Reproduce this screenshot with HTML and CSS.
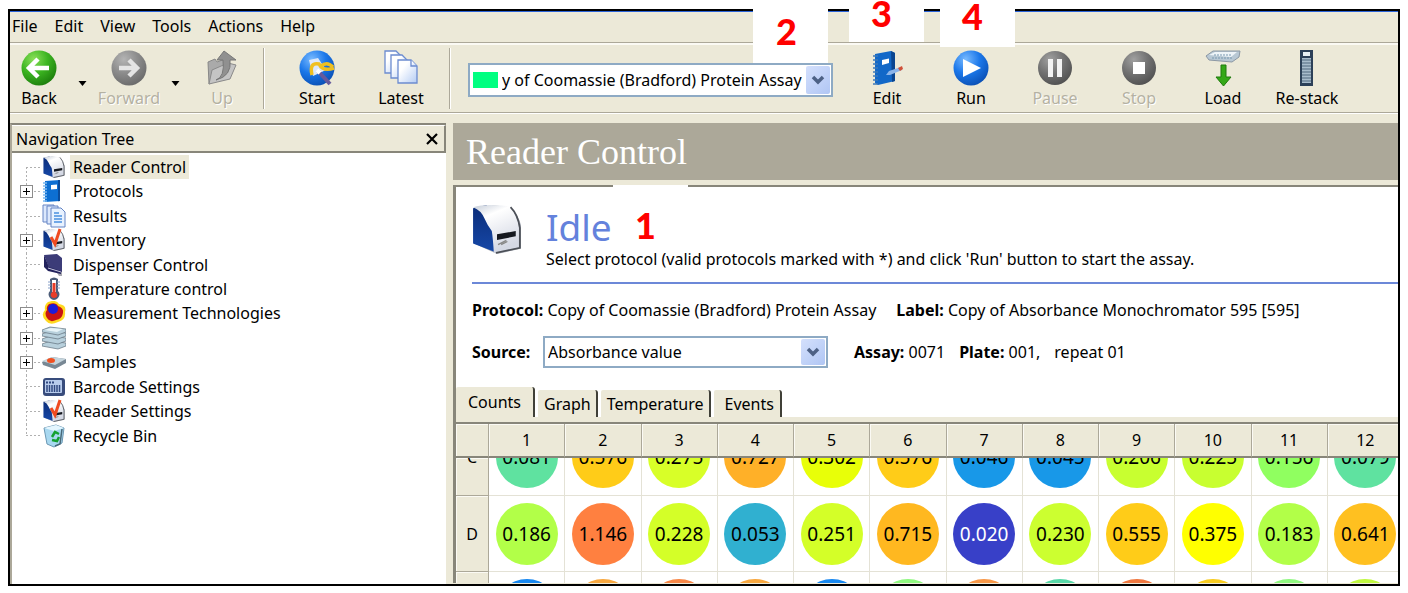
FILE: index.html
```html
<!DOCTYPE html>
<html lang="en">
<head>
<meta charset="utf-8">
<title>Reader Control</title>
<link rel="stylesheet" href="styles.css">
</head>
<body>
<svg class="defs" aria-hidden="true">
  <defs>
    <radialGradient id="gGreen" cx=".35" cy=".25" r=".8"><stop offset="0" stop-color="#8be05a"/><stop offset=".5" stop-color="#3cb521"/><stop offset="1" stop-color="#1c7d0c"/></radialGradient>
    <radialGradient id="gGray" cx=".35" cy=".25" r=".8"><stop offset="0" stop-color="#b4b4b4"/><stop offset=".5" stop-color="#8c8c8c"/><stop offset="1" stop-color="#6a6a6a"/></radialGradient>
    <radialGradient id="gDark" cx=".35" cy=".25" r=".8"><stop offset="0" stop-color="#a0a0a0"/><stop offset=".5" stop-color="#737373"/><stop offset="1" stop-color="#505050"/></radialGradient>
    <radialGradient id="gBlue" cx=".35" cy=".25" r=".8"><stop offset="0" stop-color="#78baff"/><stop offset=".5" stop-color="#1c78ea"/><stop offset="1" stop-color="#0a4fb4"/></radialGradient>
    <linearGradient id="gPage" x2="1" y2="1"><stop offset=".3" stop-color="#fff"/><stop offset="1" stop-color="#b4ccf4"/></linearGradient>
    <linearGradient id="gShell" x2=".4" y2="1"><stop offset="0" stop-color="#c4ccd8"/><stop offset=".3" stop-color="#fff"/><stop offset="1" stop-color="#d4d8e4"/></linearGradient>
    <linearGradient id="gNavy" x2="0" y2="1"><stop offset="0" stop-color="#0b2c78"/><stop offset="1" stop-color="#1648a8"/></linearGradient>
    <symbol id="reader" viewBox="0 0 48 48">
      <path d="M3 5 L19 1 L36 3 Q44 9 47 20 L47 43 L24 48 L2 38 Z" fill="#b0b4bc"/>
      <path d="M1 4 L14 1 L24 20 L22 46 L1 38 Z" fill="url(#gNavy)"/>
      <path d="M1 3 Q8 1 18 1 Q30 1 37 3 Q43 9 45 22 L45 42 L21 47 Q20 32 19 26 Q15 21 12 14 Q9 6 1 3 Z" fill="url(#gShell)"/>
      <path d="M37 3 Q44 10 46 23 V42 L23 47" fill="none" stroke="#4c5058" stroke-width="1.700"/>
      <path d="M24 29 L42 26 V31 L24 34.500 Z" fill="#15181f"/>
      <path d="M25 39 L33 35 M28 39 L34 36" stroke="#888" stroke-width="1.300"/>
    </symbol>
    <symbol id="book" viewBox="0 0 20 24">
      <path d="M3 2 L18 1 V22 L3 23 Z" fill="#0d6fd2"/><path d="M16 1 h2 v21 l-2 .2 Z" fill="#0a4c9c"/>
      <path d="M1 4h4 M1 7h4 M1 10h4 M1 13h4 M1 16h4 M1 19h4 M1 22h4" stroke="#7ab8f0" stroke-width="1.3"/>
      <path d="M9 6 L15 5.500 V10 L9 10.500 Z" fill="#fff"/>
    </symbol>
    <symbol id="tick" viewBox="0 0 24 24">
      <use href="#reader" x="1" y="1" width="22" height="22"/>
      <path d="M9 9 L13 16 L18 1" fill="none" stroke="#f04a20" stroke-width="3"/>
    </symbol>
    <symbol id="chev" viewBox="0 0 14 10"><path d="M2 2 L7 7 L12 2" fill="none" stroke="#4d6185" stroke-width="3.500"/></symbol>
  </defs>
</svg>

<div class="window">
  <nav class="menubar" aria-label="Menu">
    <button>File</button><button>Edit</button><button>View</button><button>Tools</button><button>Actions</button><button>Help</button>
  </nav>

  <div class="toolbar">
    <button class="tool back"><svg class="ic" viewBox="0 0 36 36"><circle cx="18" cy="18" r="17.500" fill="url(#gGreen)"/><path d="M17 9 L8 18 L17 27 M9 18 H28" fill="none" stroke="#fff" stroke-width="4.500"/></svg>Back</button>
    <button class="drop" aria-label="Back history"><svg class="tri" viewBox="0 0 8 5"><path d="M0 0H8L4 5Z"/></svg></button>
    <button class="tool forward" disabled><svg class="ic" viewBox="0 0 36 36"><circle cx="18" cy="18" r="17.500" fill="url(#gGray)"/><path d="M18 10 L26 18 L18 26 M25 18 H8" fill="none" stroke="#e4e4e4" stroke-width="4.500"/></svg>Forward</button>
    <button class="drop" aria-label="Forward history"><svg class="tri" viewBox="0 0 8 5"><path d="M0 0H8L4 5Z"/></svg></button>
    <button class="tool up" disabled><svg class="ic" viewBox="0 0 36 36"><path d="M4 12 L11 9 L13 12 L21 9 V25 L5 34 Z" fill="#aaa" stroke="#888"/><path d="M8 20 L24 13 L32 15 L26 29 L5 34 Z" fill="#c4c4c4" stroke="#8a8a8a"/><path d="M12 30 Q21 27 19 10 H13 L20 1 L32 10 H26 Q28 26 12 30 Z" fill="#909090" stroke="#777"/></svg>Up</button>
    <span class="sep first"></span>
    <button class="tool"><svg class="ic" viewBox="0 0 36 36"><circle cx="18" cy="18" r="17.500" fill="url(#gBlue)"/><path d="M10 10 L19 8 L27 20 L14 26 Z" fill="#dce8fa"/><path d="M13 25 Q10 12 20 14 Q24 22 35 18 M22 16 Q28 11 34 17" fill="none" stroke="#f0c020" stroke-width="3.500"/><path d="M19 21 L31 34" stroke="#665a9c" stroke-width="4"/><path d="M18 20 L21 23" stroke="#fff" stroke-width="4"/></svg>Start</button>
    <button class="tool"><svg class="ic" viewBox="0 0 36 36"><g fill="url(#gPage)" stroke="#6c8cd0" stroke-width="1.300"><path d="M2 1 H13 L18 6 V23 H2 Z"/><path d="M8 5 H19 L25 11 V28 H8 Z"/><path d="M15 10 H28 L34 16 V33 H15 Z"/><path d="M28 10 V16 H34"/></g></svg>Latest</button>
    <span class="sep second"></span>
    <div class="combo protocol">
      <span class="swatch"></span>
      <select aria-label="Protocol"><option>y of Coomassie (Bradford) Protein Assay</option></select>
      <span class="knob"><svg viewBox="0 0 14 10"><use href="#chev"/></svg></span>
    </div>
    <button class="tool"><svg class="ic" viewBox="0 0 36 36"><path d="M6 4 L22 1 L26 3 V31 L9 35 L6 33 Z" fill="#1268c8"/><path d="M22 1 L26 3 V31 L23 32 Z" fill="#0a4590"/><path d="M4 6h5 M4 10h5 M4 14h5 M4 18h5 M4 22h5 M4 26h5 M4 30h5 M4 34h5" stroke="#3c78b8" stroke-width="1.700"/><path d="M13 10 L20 8.500 V13 L13 15 Z" fill="#fff"/><path d="M17 25 L20 21 L32 17 L33 20 L21 25 Z" fill="#8ab4ea"/><path d="M29 18 L33 16 L34 19 L31 21 Z" fill="#d05038"/></svg>Edit</button>
    <button class="tool"><svg class="ic" viewBox="0 0 36 36"><circle cx="18" cy="18" r="17.500" fill="url(#gBlue)"/><path d="M10 9 L28 18 L10 27 Z" fill="#fff"/></svg>Run</button>
    <button class="tool" disabled><svg class="ic" viewBox="0 0 36 36"><circle cx="18" cy="18" r="17" fill="url(#gDark)"/><path d="M11 9h5v18h-5z M20 9h5v18h-5z" fill="#f2f2f2"/></svg>Pause</button>
    <button class="tool" disabled><svg class="ic" viewBox="0 0 36 36"><circle cx="18" cy="18" r="17" fill="url(#gDark)"/><path d="M12 12h12v12H12z" fill="#fff"/></svg>Stop</button>
    <button class="tool"><svg class="ic" viewBox="0 0 36 36"><path d="M1 6 L8 1 L35 1 L34 7 L27 12 L4 10 Z" fill="#b8c8d4" stroke="#8c98a4"/><path d="M4 5 L10 2 H32 L26 7 Z" fill="#eef4f8"/><path d="M7 8h20 M9 5h18" stroke="#7898b0" stroke-width="1" stroke-dasharray="2 1"/><path d="M16 15 H21 V27 H26 L18.500 36 L11 27 H16 Z" fill="#35a818" stroke="#1f7a0c"/></svg>Load</button>
    <button class="tool"><svg class="ic" viewBox="0 0 36 36"><path d="M11 0H24V36H11Z" fill="#2c4058"/><path d="M14 2h7v4h-7z" fill="#e8f0f4"/><path d="M13 8h9v25h-9z" fill="#a8bccc"/><path d="M13 10h9 M13 13h9 M13 16h9 M13 19h9 M13 22h9 M13 25h9 M13 28h9 M13 31h9" stroke="#50687e"/></svg>Re-stack</button>
  </div>

  <div class="body">
    <aside class="side">
      <header class="side-head"><span>Navigation Tree</span><button aria-label="Close"><svg viewBox="0 0 12 12"><path d="M1 1L11 11M11 1L1 11" stroke="#000" stroke-width="2.200"/></svg></button></header>
      <ul class="tree">
        <li><span class="branch"></span><svg class="ti" viewBox="0 0 24 24"><use href="#reader" x="1" y="1" width="22" height="22"/></svg><a href="#" class="on">Reader Control</a></li>
        <li><span class="branch"><button class="plus" aria-label="Expand"></button></span><svg class="ti" viewBox="0 0 24 24"><use href="#book" width="20" height="24"/></svg><a href="#">Protocols</a></li>
        <li><span class="branch"></span><svg class="ti" viewBox="0 0 24 24"><g fill="#dce8fc" stroke="#6484c4"><path d="M1 1H12V18H1Z"/><path d="M5 2H16V20H5Z"/><path d="M9 4H19L23 8V23H9Z" fill="#e8f2ff"/></g><path d="M12 9h5M12 12h8M12 15h8M12 18h8" stroke="#4a90e0" stroke-width="1.500"/></svg><a href="#">Results</a></li>
        <li><span class="branch"><button class="plus" aria-label="Expand"></button></span><svg class="ti" viewBox="0 0 24 24"><use href="#tick"/></svg><a href="#">Inventory</a></li>
        <li><span class="branch"></span><svg class="ti" viewBox="0 0 24 24"><path d="M5 5L20 8V23L17 23Z" fill="#a8a8b0"/><path d="M2 2L15 1L20 5V19L7 15Z" fill="#3c3c78"/><path d="M2 2L7 14L19 18V21L6 18L2 14Z" fill="#22225c"/><path d="M6 15L19 19" stroke="#c8c8e0"/></svg><a href="#">Dispenser Control</a></li>
        <li><span class="branch"></span><svg class="ti" viewBox="0 0 24 24"><path d="M8 2Q12 -1 16 2V14Q19 17 16 21Q12 25 8 21Q5 17 8 14Z" fill="#4c5c78"/><path d="M10 3h4v12h-4z" fill="#fff"/><path d="M10.500 6h3v9q3 3 1 5q-2.500 2-5 0q-2-3 1-5z" fill="#e83c28"/><path d="M6 5h3M6 8h3M6 11h3M15 5h3M15 8h3M15 11h3" stroke="#88a0c8"/></svg><a href="#">Temperature control</a></li>
        <li><span class="branch"><button class="plus" aria-label="Expand"></button></span><svg class="ti" viewBox="0 0 24 24"><path d="M6 1Q14 -2 17 3Q25 4 23 11Q24 19 16 21Q8 25 4 20Q-2 14 3 9Q2 4 6 1Z" fill="#ffd820"/><path d="M7 3Q14 1 16 5Q22 7 21 12Q20 18 14 19Q8 22 5 17Q2 12 5 9Q4 6 7 3Z" fill="#c81414"/><circle cx="11" cy="8" r="5" fill="#1c1cd8"/></svg><a href="#">Measurement Technologies</a></li>
        <li><span class="branch"><button class="plus" aria-label="Expand"></button></span><svg class="ti" viewBox="0 0 24 24"><g fill="#b8d0dc" stroke="#60707c" stroke-width=".7"><path d="M0 18L8 15L24 17V20L16 23L0 20Z"/><path d="M0 13L8 10L24 12V15L16 18L0 15Z"/><path d="M0 8L8 5L24 7V10L16 13L0 10Z"/><path d="M0 4L8 1L24 3V6L16 9L0 6Z"/></g><path d="M2 4L9 2L21 3L15 6Z" fill="#e8f4f8"/></svg><a href="#">Plates</a></li>
        <li><span class="branch"><button class="plus" aria-label="Expand"></button></span><svg class="ti" viewBox="0 0 24 24"><path d="M0 12L10 7L24 9V13L13 19L1 15Z" fill="#788894"/><path d="M0 11L10 7L24 9L13 15Z" fill="#c4d4dc"/><ellipse cx="9" cy="10.500" rx="4" ry="2.500" fill="#f05020"/></svg><a href="#">Samples</a></li>
        <li><span class="branch"></span><svg class="ti" viewBox="0 0 24 24"><rect x="1" y="3" width="22" height="18" rx="3" fill="#384c7c"/><rect x="3" y="5" width="17" height="13" rx="1" fill="#b8ccec"/><path d="M4 7.500h9" stroke="#304880" stroke-dasharray="2 1" stroke-width="2"/><path d="M5 10v7M7.500 10v7M10 10v7M12.500 10v7M15 10v7M17.500 10v7" stroke="#304880" stroke-width="1.500"/></svg><a href="#">Barcode Settings</a></li>
        <li><span class="branch"></span><svg class="ti" viewBox="0 0 24 24"><use href="#tick"/></svg><a href="#">Reader Settings</a></li>
        <li><span class="branch"></span><svg class="ti" viewBox="0 0 24 24"><path d="M2 4L14 1L22 4L20 19L12 23L5 20Z" fill="#a8d8f0" stroke="#6c98b4"/><path d="M2 4L14 1L22 4L12 7Z" fill="#e4f6ff"/><path d="M20 5L18 20L13 22" fill="none" stroke="#486878" stroke-width="1.500"/><path d="M10 13L13 8L17 10M17 13L15 17L10 16" fill="none" stroke="#14a030" stroke-width="2.500"/></svg><a href="#">Recycle Bin</a></li>
      </ul>
    </aside>

    <main class="main">
      <h1 class="title">Reader Control</h1>
      <section class="panel">
        <div class="status">
          <svg class="big" viewBox="0 0 48 48"><use href="#reader"/></svg>
          <div>
            <h2>Idle</h2>
            <p>Select protocol (valid protocols marked with *) and click 'Run' button to start the assay.</p>
          </div>
        </div>
        <div class="info"><span><b>Protocol:</b> Copy of Coomassie (Bradford) Protein Assay</span><span><b>Label:</b> Copy of Absorbance Monochromator 595 [595]</span></div>
        <div class="info source">
          <label for="src">Source:</label>
          <div class="combo value">
            <select id="src"><option>Absorbance value</option></select>
            <span class="knob"><svg viewBox="0 0 14 10"><use href="#chev"/></svg></span>
          </div>
          <span class="assay"><b>Assay:</b> 0071</span><span class="plate"><b>Plate:</b> 001,</span><span>repeat 01</span>
        </div>
        <div class="tabs" role="tablist">
          <button role="tab" aria-selected="true">Counts</button><button role="tab">Graph</button><button role="tab">Temperature</button><button role="tab">Events</button>
        </div>
        <div class="sheet">
          <table>
            <thead><tr><th class="corner"></th><th>1</th><th>2</th><th>3</th><th>4</th><th>5</th><th>6</th><th>7</th><th>8</th><th>9</th><th>10</th><th>11</th><th>12</th></tr></thead>
            <tbody>
              <tr class="cut">
                <th><div><span>C</span></div></th>
                <td><div><span style="background:#5fe2a0">0.081</span></div></td>
                <td><div><span style="background:#ffcc18">0.576</span></div></td>
                <td><div><span style="background:#d8ff28">0.275</span></div></td>
                <td><div><span style="background:#ffb028">0.727</span></div></td>
                <td><div><span style="background:#e8ff08">0.302</span></div></td>
                <td><div><span style="background:#ffcc18">0.576</span></div></td>
                <td><div><span style="background:#1898e8">0.046</span></div></td>
                <td><div><span style="background:#1898e8">0.045</span></div></td>
                <td><div><span style="background:#c8ff30">0.206</span></div></td>
                <td><div><span style="background:#c8ff30">0.225</span></div></td>
                <td><div><span style="background:#90ff60">0.156</span></div></td>
                <td><div><span style="background:#5fe2a0">0.079</span></div></td>
              </tr>
              <tr>
                <th><div><span>D</span></div></th>
                <td><div><span style="background:#b2ff48">0.186</span></div></td>
                <td><div><span style="background:#ff8040">1.146</span></div></td>
                <td><div><span style="background:#d4ff28">0.228</span></div></td>
                <td><div><span style="background:#30b0d0">0.053</span></div></td>
                <td><div><span style="background:#d4ff28">0.251</span></div></td>
                <td><div><span style="background:#ffb820">0.715</span></div></td>
                <td><div><span class="low" style="background:#3840c8">0.020</span></div></td>
                <td><div><span style="background:#ccff30">0.230</span></div></td>
                <td><div><span style="background:#ffcc18">0.555</span></div></td>
                <td><div><span style="background:#ffff00">0.375</span></div></td>
                <td><div><span style="background:#b2ff48">0.183</span></div></td>
                <td><div><span style="background:#ffc020">0.641</span></div></td>
              </tr>
              <tr>
                <th><div></div></th>
                <td><div><span style="background:#1888f0"></span></div></td>
                <td><div><span style="background:#f8a840"></span></div></td>
                <td><div><span style="background:#f88848"></span></div></td>
                <td><div><span style="background:#f8a840"></span></div></td>
                <td><div><span style="background:#1888f0"></span></div></td>
                <td><div><span style="background:#90f880"></span></div></td>
                <td><div><span style="background:#f89848"></span></div></td>
                <td><div><span style="background:#58d8a8"></span></div></td>
                <td><div><span style="background:#f07840"></span></div></td>
                <td><div><span style="background:#f8cc20"></span></div></td>
                <td><div><span style="background:#90f880"></span></div></td>
                <td><div><span style="background:#c0f840"></span></div></td>
              </tr>
            </tbody>
          </table>
        </div>
      </section>
    </main>
  </div>
</div>

<span class="mark m1">1</span>
<span class="mark m2">2</span>
<span class="mark m3">3</span>
<span class="mark m4">4</span>
</body>
</html>
```
FILE: styles.css
```css
* { box-sizing: border-box; }
body {
  margin: 0;
  height: 100vh;
  padding: 9px 8px 7px;
  position: relative;
  display: flex;
  background: #fff;
  color: #000;
  font: 16px/20px "Noto Sans", sans-serif;
  overflow: hidden;
}
button { font: inherit; color: inherit; background: none; border: 0; padding: 0; }
.defs { position: absolute; width: 0; height: 0; }
a { color: inherit; text-decoration: none; }

.window {
  flex: 1;
  min-width: 0;
  display: flex;
  flex-direction: column;
  border: 2px solid #000;
  background: #ece9d8;
  overflow: hidden;
}
.menubar {
  display: flex;
  gap: 17px;
  height: 32px;
  padding: 0 2px 2px;
  flex: none;
  border-top: 1px solid #2a62d8;
  border-bottom: 1px solid #aca899;
}

.toolbar {
  display: flex;
  flex: none;
  height: 70px;
  padding-left: 1px;
  border-top: 2px solid #fbfaf4;
  border-bottom: 1px solid #aca899;
}
.tool {
  flex: none;
  width: 84px;
  padding-top: 5px;
  display: flex;
  flex-direction: column;
  align-items: center;
  gap: 2px;
  white-space: nowrap;
}
.tool:disabled { color: #b4b1a2; text-shadow: 1px 1px #fff; }
.ic { width: 36px; height: 36px; }
.back { width: 56px; }
.forward, .up { width: 62px; }
.drop { width: 31px; padding-top: 10px; }
.tri { width: 9px; height: 5px; display: block; margin: 0 auto; }
.sep { width: 2px; margin: 3px 0; border-left: 1px solid #aca899; border-right: 1px solid #fff; }
.sep.first { margin-left: 10px; margin-right: 10px; }
.sep.second { margin-left: 6px; margin-right: 17px; }

.combo { position: relative; background: #fff; border: 2px solid #8eaac4; }
.combo select {
  appearance: none;
  display: block;
  width: 100%;
  height: 100%;
  border: 0;
  padding: 0 3px;
  background: none;
  color: #000;
  font: inherit;
}
.knob {
  position: absolute;
  top: 1px; right: 1px; bottom: 1px;
  width: 24px;
  display: flex;
  align-items: center;
  justify-content: center;
  background: linear-gradient(135deg, #d4e0fc, #b0c6f4);
  border-radius: 2px;
  pointer-events: none;
}
.knob svg { width: 14px; height: 10px; }
.protocol { width: 365px; height: 34px; margin: 18px 12px 0 0; }
.protocol select { padding-left: 32px; }
.swatch { position: absolute; left: 3px; top: 7px; width: 25px; height: 16px; background: #00ff80; }

.body { display: flex; flex: 1; min-height: 0; border-top: 1px solid #fff; }
.side {
  width: 436px;
  flex: none;
  margin-top: 9px;
  background: #fff;
  border-top: 2px solid #88867a;
  border-left: 2px solid #aca899;
}
.side-head {
  display: flex;
  align-items: center;
  justify-content: space-between;
  height: 28px;
  padding: 0 6px 0 4px;
  background: #ece9d8;
  border-top: 1px solid #fff;
  border-right: 2px solid #88867a;
  border-bottom: 2px solid #88867a;
}
.side-head svg { width: 12px; height: 12px; display: block; }
.tree {
  list-style: none;
  margin: 0;
  padding: 2px 0 0 14px;
  height: 295px;
  display: grid;
  grid-auto-rows: 1fr;
}
.tree li { display: flex; align-items: stretch; }
.branch {
  --dots-y: repeating-linear-gradient(#b0b0b0 0 2px, transparent 2px 4px);
  width: 16px;
  position: relative;
  background:
    repeating-linear-gradient(90deg, #b0b0b0 0 2px, transparent 2px 4px) 0 50% / 16px 1px no-repeat,
    var(--dots-y) 0 0 / 1px 100% no-repeat;
}
.tree li:first-child .branch {
  background:
    repeating-linear-gradient(90deg, #b0b0b0 0 2px, transparent 2px 4px) 0 50% / 16px 1px no-repeat,
    var(--dots-y) 0 100% / 1px 50% no-repeat;
}
.tree li:last-child .branch {
  background:
    repeating-linear-gradient(90deg, #b0b0b0 0 2px, transparent 2px 4px) 0 50% / 16px 1px no-repeat,
    var(--dots-y) 0 0 / 1px 50% no-repeat;
}
.plus {
  position: absolute;
  left: -6px;
  top: 6px;
  width: 13px;
  height: 13px;
  border: 1px solid #8c8c8c;
  background:
    linear-gradient(#000, #000) center / 7px 1px no-repeat,
    linear-gradient(#000, #000) center / 1px 7px no-repeat,
    #fff;
}
.ti { width: 24px; height: 24px; flex: none; }
.tree a { margin-left: 4px; padding: 0 3px; line-height: 24px; }
.tree .on { background: #ece9d8; }

.main {
  flex: 1;
  min-width: 0;
  display: flex;
  flex-direction: column;
  margin: 9px 0 1px 7px;
}
.title {
  flex: none;
  margin: 0 0 5px;
  padding: 9px 13px 8px;
  background: #aca899;
  color: #fff;
  font: 36px/40px "Liberation Serif", serif;
}
.panel {
  flex: 1;
  min-height: 0;
  background: #fff;
  border-top: 2px solid #88867a;
  border-left: 3px solid #88867a;
  overflow: hidden;
}
.status {
  display: flex;
  gap: 24px;
  margin-left: 16px;
  padding: 17px 0 13px;
  border-bottom: 2px solid #6c88d8;
}
.big { width: 50px; height: 50px; flex: none; }
.status h2 { margin: 0; font-size: 37px; line-height: 45px; font-weight: 400; color: #6482dc; }
.status p { margin: 0; line-height: 20px; white-space: nowrap; }
.info {
  display: flex;
  align-items: center;
  height: 52px;
  padding-left: 16px;
  gap: 20px;
  white-space: nowrap;
}
.info.source { height: 32px; gap: 0; }
.source label { width: 71px; font-weight: 700; }
.value { width: 285px; height: 32px; margin-right: 26px; }
.assay { margin-right: 14px; }
.plate { margin-right: 14px; }

.tabs { display: flex; align-items: flex-end; height: 49px; }
.tabs button {
  height: 27px;
  padding: 0 5px 0 6px;
  margin-right: 3px;
  background: #ece9d8;
  border-right: 2px solid #404038;
  border-radius: 2px 3px 0 0;
}
.tabs button[aria-selected="true"] { height: 30px; padding: 0 12px; }
.tabs button:last-child { padding: 0 6px 0 11px; }
.sheet { border-top: 5px solid #ece9d8; }
.sheet table { border-collapse: separate; border-spacing: 0; table-layout: fixed; width: 948px; border-top: 2px solid #88867a; }
.sheet th, .sheet td { padding: 0; font-weight: 400; text-align: center; }
.sheet th { background: #ece9d8; border-right: 1px solid #aca899; border-bottom: 1px solid #aca899; box-shadow: inset 1px 1px #fbfaf4; }
.sheet thead th { height: 34px; border-bottom: 2px solid #88867a; }
.sheet .corner { width: 33px; }
.sheet td { border-right: 1px solid #e4e2d6; border-bottom: 1px solid #e4e2d6; }
.sheet td div, .sheet tbody th div { height: 75px; display: flex; align-items: center; justify-content: center; }
.sheet td span { width: 62px; height: 62px; border-radius: 50%; line-height: 62px; font-size: 19px; }
.sheet td .low { color: #fff; }
.sheet tbody .cut div { height: 37px; align-items: flex-end; overflow: hidden; }
.sheet .cut td span { margin-bottom: 7px; flex: none; }
.sheet .cut th span { margin-bottom: 28px; }

.mark {
  position: absolute;
  width: 75px;
  background: #fff;
  color: #f00;
  text-align: center;
  font: 900 36px/40px Lato, sans-serif;
}
.m1 { left: 613px; top: 185px; padding: 20px 10px 0 0; }
.m2 { left: 753px; top: 0; height: 63px; padding: 11px 8px 0 0; }
.m3 { left: 849px; top: 0; height: 42px; line-height: 26px; padding-right: 10px; }
.m4 { left: 940px; top: 0; height: 47px; line-height: 32px; padding-right: 10px; }
```
